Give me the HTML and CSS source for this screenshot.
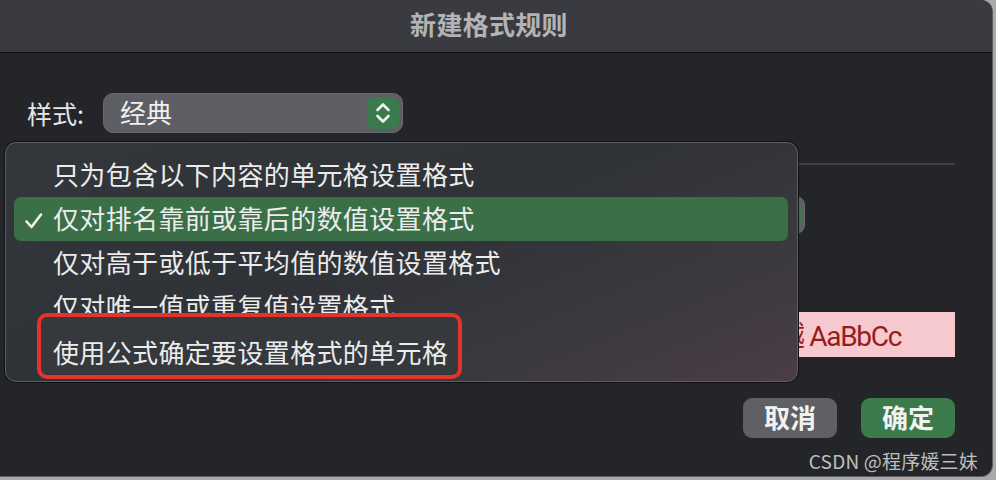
FILE: index.html
```html
<!DOCTYPE html>
<html lang="zh-CN">
<head>
<meta charset="utf-8">
<title>新建格式规则</title>
<link rel="stylesheet" href="styles.css">
</head>
<body>
<div class="window">
  <div class="titlebar"><span class="title">新建格式规则</span></div>
  <div class="content">
    <div class="style-row">
      <span class="label">样式:</span>
      <div class="select">
        <span class="select-text">经典</span>
        <span class="stepper">
          <svg width="32" height="32" viewBox="0 0 32 32"><path d="M10.5 13 L16 7.5 L21.5 13 M10.5 19 L16 24.5 L21.5 19" fill="none" stroke="#f2f2f2" stroke-width="2.6" stroke-linecap="round" stroke-linejoin="round"/></svg>
        </span>
      </div>
    </div>
    <div class="separator"></div>
    <div class="rule-select"><span class="rule-stepper"></span></div>
    <div class="preview-row">
      <div class="preview">微软卓越 AaBbCc</div>
    </div>
    <div class="buttons">
      <button class="btn btn-cancel">取消</button>
      <button class="btn btn-ok">确定</button>
    </div>
  </div>
  <div class="watermark">CSDN @程序媛三妹</div>

  <div class="menu">
    <div class="item"><span class="check"></span><span class="text">只为包含以下内容的单元格设置格式</span></div>
    <div class="item selected"><span class="check"><svg width="20" height="20" viewBox="0 0 20 20"><path d="M2.5 10.5 L7.5 16 L17 3.5" fill="none" stroke="#f4f4f4" stroke-width="2.6" stroke-linecap="round" stroke-linejoin="round"/></svg></span><span class="text">仅对排名靠前或靠后的数值设置格式</span></div>
    <div class="item"><span class="check"></span><span class="text">仅对高于或低于平均值的数值设置格式</span></div>
    <div class="item"><span class="check"></span><span class="text">仅对唯一值或重复值设置格式</span></div>
    <div class="item annotated"><span class="check"></span><span class="text">使用公式确定要设置格式的单元格</span></div>
  </div>
</div>
</body>
</html>
```

FILE: styles.css
```css
*, *::before, *::after { box-sizing: border-box; }
html, body { margin: 0; padding: 0; }
body {
  background: #a9a9ab;
  width: 996px;
  height: 480px;
  overflow: hidden;
  font-family: "Noto Sans CJK SC", "Noto Sans", sans-serif;
}
.window {
  position: relative;
  width: 993px;
  height: 477px;
  background: #232529;
  border-right: 1px solid #5c5d61;
  border-bottom: 1px solid #5c5d61;
  border-radius: 0 12px 12px 0;
  overflow: hidden;
  display: flex;
  flex-direction: column;
}
.titlebar {
  height: 53px;
  flex: none;
  background: #3a3b40;
  border-bottom: 1px solid #0c0c0e;
  display: flex;
  align-items: center;
  justify-content: center;
  padding-right: 14px;
}
.title {
  font-size: 26px;
  font-weight: 700;
  color: #b3b3b5;
  line-height: 1;
  margin-top: -4px;
  letter-spacing: 0.3px;
}
.content {
  padding: 0 37px 0 27px;
  display: flex;
  flex-direction: column;
}
.style-row {
  margin-top: 40px;
  height: 40px;
  display: flex;
  align-items: center;
}
.label {
  font-size: 25px;
  color: #e6e6e6;
  width: 76px;
  line-height: 1;
}
.select {
  width: 300px;
  height: 40px;
  background: #5e5f65;
  border: 1px solid #68696e;
  border-radius: 10px;
  display: flex;
  align-items: center;
  justify-content: space-between;
  padding: 0 3px 0 16px;
}
.select-text {
  font-size: 26px;
  color: #f0f0f0;
  line-height: 1;
  margin-top: -3px;
}
.stepper {
  width: 32px;
  height: 32px;
  background: #3b7a4b;
  border-radius: 7px;
  display: flex;
}
.separator {
  margin-top: 30px;
  height: 2px;
  background: #404247;
}
.rule-select {
  margin-top: 31px;
  width: 778px;
  height: 38px;
  background: #5e5f65;
  border-radius: 9px;
  display: flex;
  justify-content: flex-end;
  padding: 3px;
  border: 1px solid #6b6c70;
}
.rule-stepper {
  width: 30px;
  background: #3b7a4b;
  border-radius: 6px;
}
.preview-row {
  margin-top: 78px;
  display: flex;
  justify-content: flex-end;
}
.preview {
  width: 480px;
  height: 45px;
  background: #f6c9cf;
  color: #9a1b1b;
  font-family: Roboto, "Noto Sans CJK SC", sans-serif;
  font-size: 28px;
  letter-spacing: -1.3px;
  display: flex;
  align-items: center;
  justify-content: flex-end;
  padding-right: 54px;
  padding-bottom: 2px;
}
.buttons {
  margin-top: 41px;
  display: flex;
  justify-content: flex-end;
  gap: 24px;
}
.btn {
  width: 94px;
  height: 40px;
  border: none;
  border-radius: 9px;
  font-family: "Noto Sans CJK SC", sans-serif;
  font-size: 26px;
  font-weight: 700;
  color: #f2f2f2;
  line-height: 1;
  display: flex;
  align-items: center;
  justify-content: center;
  padding: 0 0 3px 0;
}
.btn-cancel { background: #5f6065; }
.btn-ok { background: #3a7a4b; }
.watermark {
  position: absolute;
  right: 14px;
  bottom: 6px;
  font-size: 19px;
  color: rgba(235, 235, 235, 0.78);
  line-height: 1;
  letter-spacing: 0.2px;
}
.menu {
  position: absolute;
  left: 5px;
  top: 142px;
  width: 793px;
  height: 240px;
  border-radius: 11px;
  border: 1px solid #5d5f64;
  box-shadow: 0 0 0 1px #0f1012;
  background: linear-gradient(158deg, #33363b 0%, #2f3237 45%, #3a393e 75%, #4b3d45 100%);
  padding: 10px 9px 8px 8px;
  display: flex;
  flex-direction: column;
}
.item {
  height: 44px;
  flex: none;
  display: flex;
  align-items: center;
  font-size: 26px;
  color: #ececec;
  line-height: 1;
  border-radius: 7px;
  letter-spacing: 0.35px;
}
.item .text { margin-top: -3px; }
.item.selected { background: #3a6f47; }
.check {
  width: 39px;
  display: flex;
  padding-left: 10px;
  padding-top: 4px;
}
.item.annotated {
  position: relative;
  margin-top: 2px;
}
.item.annotated::before {
  content: "";
  position: absolute;
  left: 23px;
  top: -18px;
  width: 425px;
  height: 66px;
  border: 4px solid #e4332a;
  border-radius: 10px;
  background: #35383d;
}
.item.annotated .text {
  position: relative;
  z-index: 1;
}
```
